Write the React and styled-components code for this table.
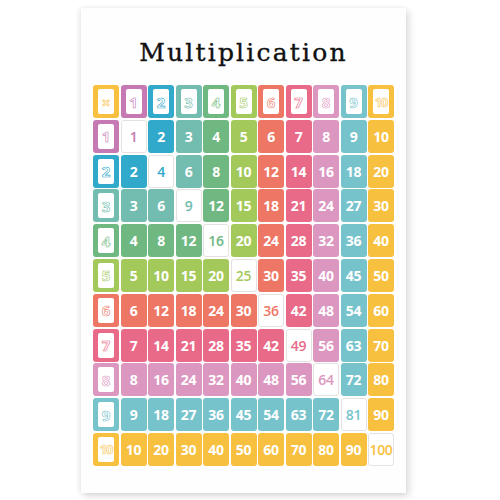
import React from 'react';
import styled, { createGlobalStyle } from 'styled-components';

const COLORS = [
    '#f8c03f',
    '#c57ab4',
    '#31a9cb',
    '#72bcb0',
    '#6fb881',
    '#a4c95b',
    '#ee7664',
    '#e96a88',
    '#dc97c1',
    '#76c3cc',
    '#f8c03f',
];

const GlobalStyle = createGlobalStyle`
    html, body {
        margin: 0;
        padding: 0;
        background: #ffffff;
    }
`;

const Page = styled.div`
    width: 500px;
    height: 500px;
    box-sizing: border-box;
    padding: 8px 0 0 81px;
    overflow: hidden;
`;

const Poster = styled.div`
    width: 325px;
    height: 485px;
    background: #fefefe;
    box-shadow: 3px 3px 7px rgba(0, 0, 0, 0.14), -2px 0 5px rgba(0, 0, 0, 0.07);
    display: flex;
    flex-direction: column;
    align-items: center;
`;

const Title = styled.h1`
    margin: 28px 0 15px;
    height: 34px;
    line-height: 34px;
    font-family: 'DejaVu Serif', 'Liberation Serif', serif;
    font-weight: 400;
    font-size: 25px;
    letter-spacing: 2.2px;
    color: #111111;
    -webkit-text-stroke: 0.35px #111111;
`;

const Grid = styled.div`
    display: grid;
    grid-template-columns: repeat(11, 26px);
    grid-auto-rows: 33px;
    column-gap: 1.5px;
    row-gap: 1.8px;
`;

const Cell = styled.div`
    border-radius: 3px;
    display: flex;
    align-items: center;
    justify-content: center;
    font-family: 'Open Sans', 'DejaVu Sans', sans-serif;
    font-weight: 700;
    font-size: 14px;
    letter-spacing: -0.3px;
    background: ${(p) => p.$color};
    color: #ffffff;
`;

const DiagonalCell = styled(Cell)`
    background: #ffffff;
    box-sizing: border-box;
    border: 1px solid #e4e2e0;
    color: ${(p) => p.$color};
    font-weight: 600;
`;

const LabelCell = styled(Cell)`
    box-sizing: border-box;
    padding: 4px 5px;
    align-items: stretch;
`;

const LabelInner = styled.div`
    flex: 1;
    background: #ffffff;
    border-radius: 2px;
    display: flex;
    align-items: center;
    justify-content: center;
    font-weight: 700;
    font-size: ${(p) => (p.$small ? '13px' : '15px')};
    letter-spacing: ${(p) => (p.$small ? '-1.2px' : '0')};
    color: #ffffff;
    -webkit-text-stroke: 0.6px ${(p) => p.$color};
`;

const Label = ({ color, children }) => (
    <LabelCell $color={color}>
        <LabelInner $color={color} $small={children === 10}>
            {children}
        </LabelInner>
    </LabelCell>
);

const App = () => {
    const cells = [];
    for (let r = 0; r <= 10; r++) {
        for (let c = 0; c <= 10; c++) {
            const key = `${r}-${c}`;
            const color = COLORS[Math.max(r, c)];
            if (r === 0 && c === 0) {
                cells.push(
                    <Label key={key} color={color}>
                        ×
                    </Label>
                );
            } else if (r === 0 || c === 0) {
                cells.push(
                    <Label key={key} color={color}>
                        {r + c}
                    </Label>
                );
            } else if (r === c) {
                cells.push(
                    <DiagonalCell key={key} $color={color}>
                        {r * c}
                    </DiagonalCell>
                );
            } else {
                cells.push(
                    <Cell key={key} $color={color}>
                        {r * c}
                    </Cell>
                );
            }
        }
    }

    return (
        <>
            <GlobalStyle />
            <Page>
                <Poster>
                    <Title>Multiplication</Title>
                    <Grid>{cells}</Grid>
                </Poster>
            </Page>
        </>
    );
};

export default App;
